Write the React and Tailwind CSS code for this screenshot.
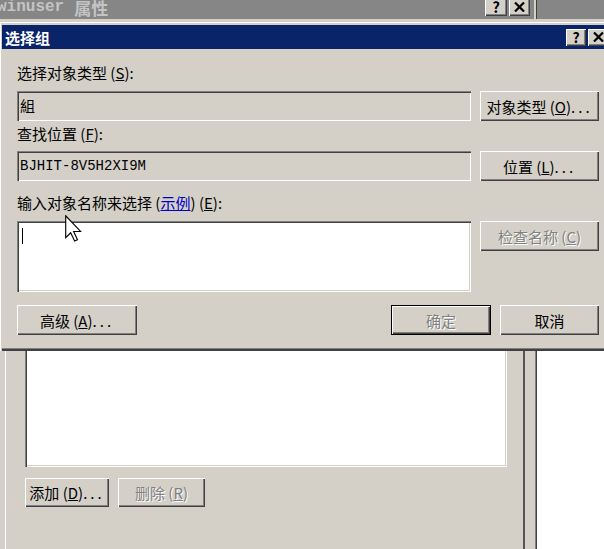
const FONT = { fontFamily: '"Noto Sans CJK SC", "Noto Sans", sans-serif' };

const raised =
  "shadow-[inset_1px_1px_0_#ffffff,inset_-1px_-1px_0_#404040,inset_-2px_-2px_0_#808080]";
const sunken =
  "shadow-[inset_1px_1px_0_#808080,inset_2px_2px_0_#404040,inset_-1px_-1px_0_#ffffff,inset_-2px_-2px_0_#d4d0c8]";

function Btn({ children, className = "", disabled, isDefault }) {
  const inner = (
    <div
      className={`flex h-full w-full items-center justify-center bg-[#d4d0c8] text-[15px] leading-none ${raised} ${
        disabled ? "text-[#808080] [text-shadow:1px_1px_0_#ffffff]" : "text-black"
      }`}
    >
      {children}
    </div>
  );
  if (isDefault) {
    return <div className={`border border-black ${className}`}>{inner}</div>;
  }
  return <div className={className}>{inner}</div>;
}

function CapBtn({ children, className = "" }) {
  return (
    <div className={`flex items-center justify-center bg-[#d4d0c8] ${raised} ${className}`}>
      {children}
    </div>
  );
}

function XGlyph() {
  return (
    <svg width="11" height="10" viewBox="0 0 11 10">
      <path d="M1 0.5 L10 9.5 M10 0.5 L1 9.5" stroke="#000" strokeWidth="2.2" />
    </svg>
  );
}

function Cursor() {
  return (
    <svg className="absolute left-[65px] top-[215px]" width="17" height="27" viewBox="0 0 12 19">
      <path
        d="M0.5 0.5 L0.5 16 L4 12.5 L6.8 18.3 L8.8 17.4 L6.1 11.6 L11 11.6 Z"
        fill="#fff"
        stroke="#000"
        strokeWidth="0.8"
        strokeLinejoin="miter"
      />
    </svg>
  );
}

export default function App() {
  return (
    <div className="relative h-[549px] w-[604px] overflow-hidden bg-[#d4d0c8]" style={FONT}>
      {/* background window title (inactive) */}
      <div className="flex h-[19px] items-start bg-[#868686]">
        <div className="ml-[-3px] flex w-[488px] items-center gap-[10px] text-[16px] font-bold leading-[15px] text-[#c4c4c4]">
          <span style={{ fontFamily: '"Liberation Mono", monospace' }}>winuser</span>
          <span className="text-[17px]">属性</span>
        </div>
        <div className="mt-[-3px] flex gap-[2px]">
          <CapBtn className="h-[19px] w-[22px] text-[15px] font-bold leading-none">?</CapBtn>
          <CapBtn className="h-[19px] w-[21px]">
            <XGlyph />
          </CapBtn>
        </div>
        <div className="ml-[4px] h-full w-[2px] bg-[#d4d0c8]" />
        <div className="h-full w-[1px] bg-[#404040]" />
      </div>
      <div className="h-[3px] bg-[#d4d0c8]" />

      {/* 选择组 dialog */}
      <div className="w-[640px] bg-[#d4d0c8] pl-[2px] pt-[3px] shadow-[inset_1px_1px_0_#ffffff]">
        <div className="flex h-[24px] items-center bg-[#0a246a] pl-[3px] pr-[2px]">
          <span className="text-[15px] font-bold leading-none text-white">选择组</span>
          <div className="ml-auto flex gap-[2px] pr-[30px]">
            <CapBtn className="h-[17px] w-[20px] text-[14px] font-bold leading-none">?</CapBtn>
            <CapBtn className="h-[17px] w-[20px]">
              <XGlyph />
            </CapBtn>
          </div>
        </div>

        <div className="pb-[13px] pl-[15px] pt-[15px] text-[15px] leading-[18px] text-black">
          <div className="h-[18px]">
            选择对象类型 (<u>S</u>):
          </div>
          <div className="mt-[9px] flex gap-[9px]">
            <div className={`flex h-[30px] w-[454px] items-center bg-[#d4d0c8] pl-[3px] ${sunken}`}>組</div>
            <Btn className="h-[30px] w-[119px]">
              对象类型 (<u>O</u>)<span className="tracking-[3px]">...</span>
            </Btn>
          </div>

          <div className="mt-[4px] h-[18px]">
            查找位置 (<u>F</u>):
          </div>
          <div className="mt-[8px] flex gap-[9px]">
            <div
              className={`flex h-[30px] w-[454px] items-center bg-[#d4d0c8] pl-[3px] text-[14px] ${sunken}`}
              style={{ fontFamily: '"Liberation Mono", monospace' }}
            >
              BJHIT-8V5H2XI9M
            </div>
            <Btn className="h-[30px] w-[119px]">
              位置 (<u>L</u>)<span className="tracking-[3px]">...</span>
            </Btn>
          </div>

          <div className="mt-[13px] h-[18px]">
            输入对象名称来选择 (<span className="text-[#0000c8] underline">示例</span>) (<u>E</u>):
          </div>
          <div className="mt-[9px] flex gap-[9px]">
            <div className={`h-[71px] w-[454px] bg-white pl-[5px] pt-[7px] ${sunken}`}>
              <div className="h-[16px] w-[1px] bg-black" />
            </div>
            <Btn disabled className="h-[30px] w-[119px]">
              检查名称 (<u>C</u>)
            </Btn>
          </div>

          <div className="mt-[13px] flex">
            <Btn className="h-[30px] w-[120px]">
              高级 (<u>A</u>)<span className="tracking-[3px]">...</span>
            </Btn>
            <Btn isDefault disabled className="ml-[254px] h-[30px] w-[100px]">
              确定
            </Btn>
            <Btn className="ml-[9px] h-[30px] w-[99px]">取消</Btn>
          </div>
        </div>
        <div className="h-[1px] bg-[#808080]" />
        <div className="h-[2px] bg-[#404040]" />
      </div>

      {/* lower part of the background window */}
      <div className="flex h-[198px]">
        <div className="flex w-[525px] border-r-2 border-[#555555] pl-[5px]">
          <div className="flex-1 border-l border-white pl-[19px]">
            <div className="h-[116px] w-[482px] bg-white shadow-[inset_1px_0_0_#808080,inset_2px_0_0_#404040,inset_0_-1px_0_#ffffff,inset_0_-2px_0_#d4d0c8,inset_-1px_0_0_#ffffff,inset_-2px_0_0_#d4d0c8]" />
            <div className="mt-[11px] flex gap-[9px]">
              <Btn className="h-[29px] w-[84px]">
                添加 (<u>D</u>)<span className="tracking-[3px]">...</span>
              </Btn>
              <Btn disabled className="h-[29px] w-[87px]">
                删除 (<u>R</u>)
              </Btn>
            </div>
          </div>
        </div>
        <div className="w-[10px] bg-[#d4d0c8]" />
        <div className="w-[1px] bg-[#808080]" />
        <div className="w-[1px] bg-[#404040]" />
        <div className="flex-1 bg-white" />
      </div>

      <Cursor />
    </div>
  );
}
